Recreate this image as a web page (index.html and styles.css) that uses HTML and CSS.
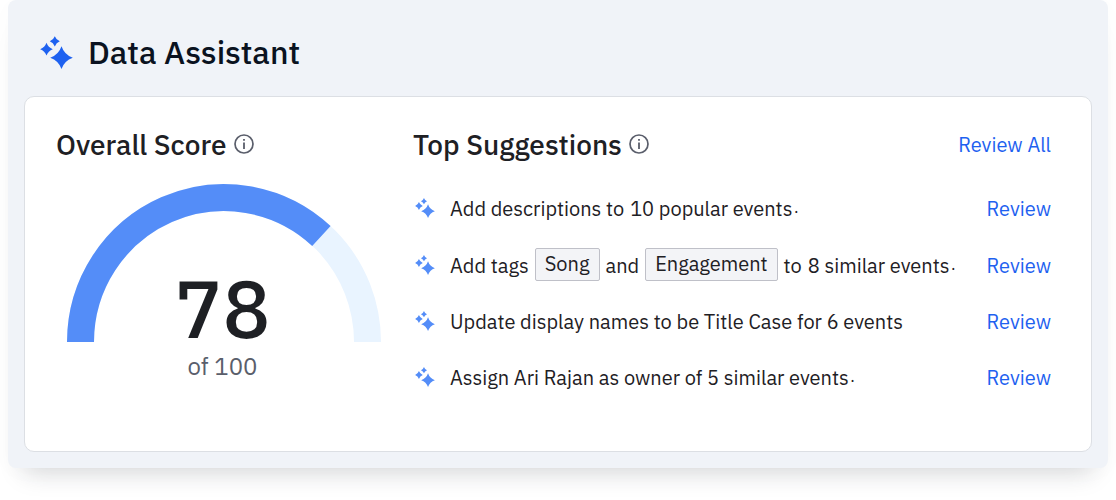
FILE: index.html
```html
<!DOCTYPE html>
<html lang="en">
<head>
<meta charset="utf-8">
<title>Data Assistant</title>
<meta name="viewport" content="width=device-width, initial-scale=1">
<link rel="stylesheet" href="styles.css">
</head>
<body>
<svg class="defs" aria-hidden="true">
  <symbol id="sparkles" viewBox="0 0 33 33">
    <path d="M21.5 10.2Q24.4 18.8 32.8 21.7Q24.4 24.6 21.5 33Q18.6 24.6 10.2 21.7Q18.6 18.8 21.5 10.2Z"/>
    <path d="M6.5 6.8Q8.2 11.5 12.8 13.2Q8.2 14.9 6.5 19.6Q4.8 14.9 0.2 13.2Q4.8 11.5 6.5 6.8Z"/>
    <path d="M14.8 0.2Q16.2 3.9 19.8 5.3Q16.2 6.7 14.8 10.4Q13.4 6.7 9.8 5.3Q13.4 3.9 14.8 0.2Z"/>
  </symbol>
  <symbol id="info" viewBox="0 0 20 20">
    <circle cx="10" cy="10" r="9" fill="none" stroke="currentColor" stroke-width="1.7"/>
    <path d="M9.1 5h1.8v1.8H9.1zM9.1 8.6h1.8V15H9.1z" fill="currentColor"/>
  </symbol>
</svg>
<main class="panel">
  <header class="panel-header">
    <svg class="logo" aria-hidden="true"><use href="#sparkles"/></svg>
    <h1 class="title">Data Assistant</h1>
  </header>
  <div class="card">
    <section class="score">
      <div class="section-header">
        <h2 class="heading">Overall Score</h2>
        <button class="info" type="button" aria-label="About the overall score"><svg class="info-icon"><use href="#info"/></svg></button>
      </div>
      <div class="gauge">
        <svg class="gauge-arc" viewBox="0 0 314 158" aria-hidden="true">
          <path class="arc-track" d="M13.5 158A143.5 144.5 0 0 1 300.5 158"/>
          <path class="arc-fill" d="M13.5 158A143.5 144.5 0 0 1 254.4 52"/>
        </svg>
        <div class="gauge-label">
          <span class="value">78</span>
          <span class="total">of 100</span>
        </div>
      </div>
    </section>
    <section class="suggestions">
      <div class="section-header">
        <h2 class="heading">Top Suggestions</h2>
        <button class="info" type="button" aria-label="About top suggestions"><svg class="info-icon"><use href="#info"/></svg></button>
        <a class="link" href="#all">Review All</a>
      </div>
      <ul class="list">
        <li class="item">
          <svg class="item-icon" aria-hidden="true"><use href="#sparkles"/></svg>
          <span>Add descriptions to</span><span>10 popular events</span><span class="dot">.</span>
          <a class="link" href="#descriptions">Review</a>
        </li>
        <li class="item">
          <svg class="item-icon" aria-hidden="true"><use href="#sparkles"/></svg>
          <span>Add tags</span><span class="tag">Song</span><span>and</span><span class="tag">Engagement</span><span>to</span><span>8 similar events</span><span class="dot">.</span>
          <a class="link" href="#tags">Review</a>
        </li>
        <li class="item">
          <svg class="item-icon" aria-hidden="true"><use href="#sparkles"/></svg>
          <span>Update display names to be Title Case for 6 events</span>
          <a class="link" href="#names">Review</a>
        </li>
        <li class="item">
          <svg class="item-icon" aria-hidden="true"><use href="#sparkles"/></svg>
          <span>Assign Ari Rajan as owner of 5 similar events</span><span class="dot">.</span>
          <a class="link" href="#owner">Review</a>
        </li>
      </ul>
    </section>
  </div>
</main>
</body>
</html>
```
FILE: styles.css
```css
* { box-sizing: border-box; }
body {
  min-height: 100vh;
  margin: 0;
  padding: 0 8px 32px;
  background: #fff;
  color: #1e2024;
  font-family: "IBM Plex Sans", Roboto, sans-serif;
  font-size: 20px;
  line-height: 24px;
}
.defs { display: none; }
.panel {
  padding: 32px 16px 16px;
  border-radius: 8px;
  background: #f0f3f8;
  box-shadow: 0 20px 24px -16px rgba(30, 36, 44, 0.18), 0 4px 24px rgba(30, 36, 44, 0.02);
}
.panel-header {
  display: flex;
  align-items: center;
  gap: 15px;
  padding: 0 16px 24px;
}
.logo { width: 33px; height: 33px; fill: #1e61f0; }
.title {
  margin: 0;
  color: #0a1220;
  font-size: 32px;
  font-weight: 500;
  line-height: 40px;
}
.card {
  display: grid;
  grid-template-columns: 336px 1fr;
  gap: 21px;
  padding: 30px 40px 56px 31px;
  border: 1px solid #dcdfe4;
  border-radius: 10px;
  background: #fff;
}
.section-header {
  display: flex;
  align-items: center;
  gap: 7px;
  white-space: nowrap;
}
.heading {
  margin: 0;
  font-size: 28px;
  font-weight: 500;
  line-height: 36px;
}
.info {
  display: flex;
  padding: 0 0 2px;
  border: 0;
  background: none;
  color: #5a5e6b;
}
.info-icon { width: 20px; height: 20px; }
.link {
  margin-left: auto;
  color: #1e61f0;
  text-decoration: none;
}
.gauge {
  display: grid;
  justify-items: center;
  padding-top: 21px;
}
.gauge-arc, .gauge-label { grid-area: 1 / 1; }
.gauge-arc { width: 314px; height: 158px; }
.arc-track, .arc-fill { fill: none; stroke-width: 27; }
.arc-track { stroke: #e9f4ff; }
.arc-fill { stroke: #548df8; }
.gauge-label {
  display: flex;
  flex-direction: column;
  align-items: center;
  padding: 82px 3px 0 0;
}
.value { font-size: 80px; font-weight: 500; line-height: 84px; }
.total { color: #5a5e6b; font-size: 24px; line-height: 32px; }
.list {
  display: grid;
  gap: 22px;
  margin: 0;
  padding: 29px 0 0;
  list-style: none;
}
.item {
  display: flex;
  align-items: center;
  gap: 6px;
  min-height: 34px;
  white-space: nowrap;
}
.item-icon {
  width: 20px;
  height: 20px;
  margin: 0 9px 2px 2px;
  fill: #548df8;
}
.tag {
  margin-bottom: 2px;
  padding: 3px 9px 4px;
  border: 1px solid #bfc0c8;
  border-radius: 2px;
  background: #f3f4f7;
}
.dot { margin-left: -4px; font-size: 12px; font-weight: 600; }
```
